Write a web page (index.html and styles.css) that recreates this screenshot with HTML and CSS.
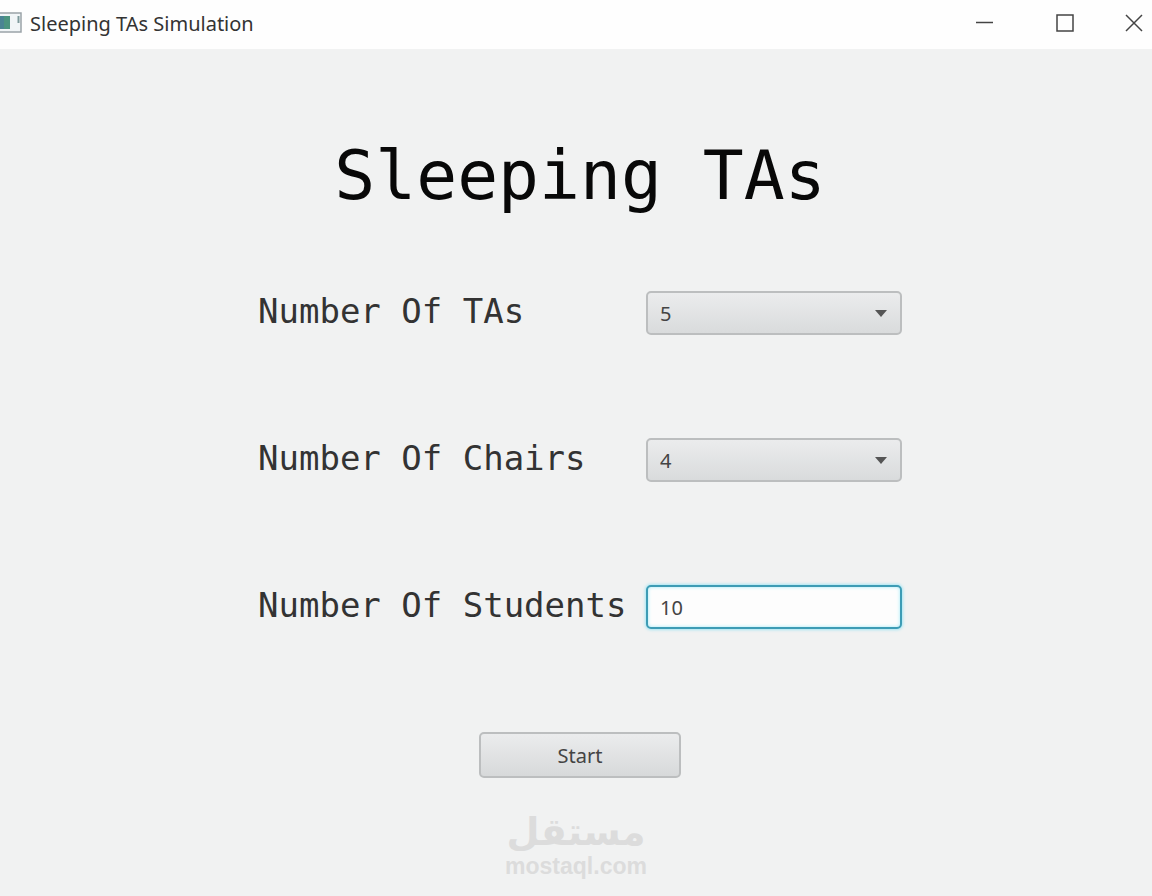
FILE: index.html
```html
<!DOCTYPE html>
<html lang="en">
<head>
    <meta charset="UTF-8">
    <meta name="viewport" content="width=device-width, initial-scale=1.0">
    <title>Sleeping TAs Simulation</title>
    <link rel="stylesheet" href="styles.css">
</head>
<body>

<header class="title-bar">
    <svg class="app-icon" width="22" height="22" viewBox="0 0 22 22" aria-hidden="true">
        <rect x="-1" y="1" width="22" height="19" fill="#f1f5f7" stroke="#9aa3a8" stroke-width="1.5"/>
        <rect x="0" y="4" width="10" height="13" fill="#4b947f"/>
        <rect x="0" y="4" width="4" height="13" fill="#4a8493"/>
        <path d="M18.500 4v7" stroke="#7e9a9c" stroke-width="2"/>
    </svg>
    <span class="window-title">Sleeping TAs Simulation</span>
    <div class="window-buttons">
        <button class="window-button" aria-label="Minimize">
            <svg width="18" height="18" viewBox="0 0 18 18"><path d="M0 8.500h17"/></svg>
        </button>
        <button class="window-button" aria-label="Maximize">
            <svg width="18" height="18" viewBox="0 0 18 18"><path d="M1 1h16v16h-16z"/></svg>
        </button>
        <button class="window-button close-button" aria-label="Close">
            <svg width="18" height="18" viewBox="0 0 18 18"><path d="M1 1l16 16M17 1L1 17"/></svg>
        </button>
    </div>
</header>

<main class="content">
    <h1>Sleeping TAs</h1>

    <form class="settings">
        <div class="row">
            <label for="ta-count">Number Of TAs</label>
            <select id="ta-count" class="field select">
                <option>1</option>
                <option>2</option>
                <option>3</option>
                <option>4</option>
                <option selected>5</option>
            </select>
        </div>
        <div class="row">
            <label for="chair-count">Number Of Chairs</label>
            <select id="chair-count" class="field select">
                <option>1</option>
                <option>2</option>
                <option>3</option>
                <option selected>4</option>
                <option>5</option>
            </select>
        </div>
        <div class="row">
            <label for="student-count">Number Of Students</label>
            <input type="text" id="student-count" class="field text-field" value="10">
        </div>
        <button type="button" class="start-button">Start</button>
    </form>
</main>

<footer class="brand">
    <span class="brand-name" lang="ar" dir="rtl">مستقل</span>
    <span class="brand-site">mostaql.com</span>
</footer>

</body>
</html>
```
FILE: styles.css
```css
* {
    box-sizing: border-box;
}
body {
    margin: 0;
    min-height: 100vh;
    display: flex;
    flex-direction: column;
    font-family: "Noto Sans", "Open Sans", sans-serif;
    background-color: #f1f2f2;
    color: #333;
}
.title-bar {
    display: flex;
    align-items: center;
    height: 49px;
    padding-bottom: 3px;
    background-color: #fefefe;
}
.window-title {
    margin-left: 8px;
    font-size: 20px;
}
.window-buttons {
    display: flex;
    gap: 22px;
    margin-left: auto;
}
.window-button {
    display: flex;
    justify-content: center;
    width: 58px;
    padding: 0;
    border: none;
    background: none;
}
.window-button svg {
    fill: none;
    stroke: #444;
    stroke-width: 1.5;
}
.close-button {
    width: 36px;
}
.content {
    display: flex;
    flex-direction: column;
    align-items: center;
    padding: 87px 0 0 8px;
}
h1 {
    margin: 0;
    font-family: "DejaVu Sans Mono", monospace;
    font-size: 68px;
    font-weight: normal;
    line-height: 80px;
    color: #080808;
}
.settings {
    display: flex;
    flex-direction: column;
    align-items: center;
    gap: 103px;
    margin-top: 75px;
}
.row {
    display: flex;
    align-items: center;
    gap: 18px;
}
label {
    width: 370px;
    padding-bottom: 4px;
    font-family: "DejaVu Sans Mono", monospace;
    font-size: 34px;
    line-height: 40px;
    white-space: nowrap;
}
.field,
.start-button {
    font-family: inherit;
    font-size: 20px;
    color: #444;
    border: 2px solid #bcbebf;
    border-radius: 5px;
}
.field {
    width: 256px;
    height: 44px;
    padding: 0 12px;
}
.select {
    appearance: none;
    background:
        url("data:image/svg+xml,%3Csvg xmlns='http://www.w3.org/2000/svg' width='14' height='8'%3E%3Cpath d='M1 1h12l-6 7z' fill='%23555'/%3E%3C/svg%3E") no-repeat right 12px center,
        linear-gradient(#ebeced, #d9dbdc);
}
.text-field {
    background-color: #fdfdfd;
    border-color: #3d9cb5;
    outline: none;
    box-shadow: 0 0 3px 1px #a5e6f4, inset 0 0 3px 1px #c5f2fa;
}
.start-button {
    width: 202px;
    height: 46px;
    padding: 0;
    background: linear-gradient(#ebeced, #d7d9da);
}
.brand {
    display: flex;
    flex-direction: column;
    align-items: center;
    margin-top: 32px;
    color: #dcdcdc;
    font-weight: bold;
}
.brand-name {
    font-family: "DejaVu Sans", sans-serif;
    font-size: 38px;
    line-height: 44px;
}
.brand-site {
    font-family: "Liberation Sans", Arial, sans-serif;
    font-size: 23px;
    line-height: 24px;
}
```
